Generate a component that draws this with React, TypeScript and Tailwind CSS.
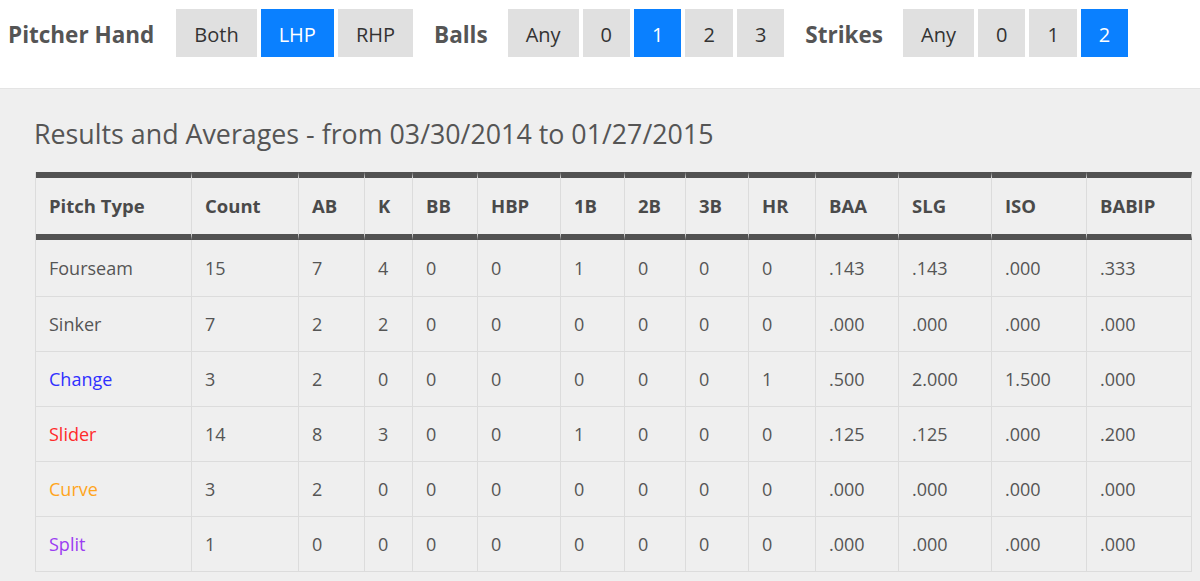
import React from "react";

type Group = { label: string; options: string[]; active: string; ml: string; mr: string };

const groups: Group[] = [
  { label: "Pitcher Hand", options: ["Both", "LHP", "RHP"], active: "LHP", ml: "ml-0", mr: "mr-[22px]" },
  { label: "Balls", options: ["Any", "0", "1", "2", "3"], active: "1", ml: "ml-[21px]", mr: "mr-[20px]" },
  { label: "Strikes", options: ["Any", "0", "1", "2"], active: "2", ml: "ml-[21px]", mr: "mr-[20px]" },
];

const headers = ["Pitch Type", "Count", "AB", "K", "BB", "HBP", "1B", "2B", "3B", "HR", "BAA", "SLG", "ISO", "BABIP"];
const widths = [156, 107, 66, 48, 65, 83, 64, 61, 63, 67, 83, 93, 95, 105];

const rows: { name: string; color: string; vals: string[] }[] = [
  { name: "Fourseam", color: "text-[#555555]", vals: ["15", "7", "4", "0", "0", "1", "0", "0", "0", ".143", ".143", ".000", ".333"] },
  { name: "Sinker", color: "text-[#555555]", vals: ["7", "2", "2", "0", "0", "0", "0", "0", "0", ".000", ".000", ".000", ".000"] },
  { name: "Change", color: "text-[#2f2fff]", vals: ["3", "2", "0", "0", "0", "0", "0", "0", "1", ".500", "2.000", "1.500", ".000"] },
  { name: "Slider", color: "text-[#ff2b2b]", vals: ["14", "8", "3", "0", "0", "1", "0", "0", "0", ".125", ".125", ".000", ".200"] },
  { name: "Curve", color: "text-[#ffa51c]", vals: ["3", "2", "0", "0", "0", "0", "0", "0", "0", ".000", ".000", ".000", ".000"] },
  { name: "Split", color: "text-[#9b3df2]", vals: ["1", "0", "0", "0", "0", "0", "0", "0", "0", ".000", ".000", ".000", ".000"] },
];

export default function App() {
  return (
    <div className="w-[1200px] h-[581px] overflow-hidden bg-white font-['Open_Sans',_'Liberation_Sans',_sans-serif]">
      <div className="h-[88px] flex items-start pt-[9px] pl-[8px]">
        {groups.map((g) => (
          <div key={g.label} className={`flex items-center ${g.ml}`}>
            <span className={`text-[22.5px] font-bold text-[#555555] leading-none pt-[5px] ${g.mr}`}>{g.label}</span>
            <div className="flex gap-[4px]">
              {g.options.map((o) => (
                <div
                  key={o}
                  className={`h-[48px] px-[18px] pt-[4px] flex items-center text-[20px] leading-none ${
                    o === g.active ? "bg-[#0a80ff] text-white" : "bg-[#e0e0e0] text-[#333333]"
                  }`}
                >
                  {o}
                </div>
              ))}
            </div>
          </div>
        ))}
      </div>
      <div className="h-[493px] bg-[#efefef] border-t border-[#e4e4e4] pl-[35px] pt-[27px]">
        <h2 className="text-[26.8px] leading-[36px] text-[#555555] ml-[-1px]">
          Results and Averages - from 03/30/2014 to 01/27/2015
        </h2>
        <div className="mt-[20px] w-[1156px] border-l border-[#dcdcdc]">
          <div className="flex">
            {headers.map((h, i) => (
              <div
                key={h}
                style={{ width: widths[i] }}
                className="shrink-0 h-[68px] border-y-[6px] border-y-[#525252] border-r border-r-[#dcdcdc] pl-[13px] flex items-center text-[18.5px] font-bold text-[#4a4a4a] whitespace-nowrap"
              >
                {h}
              </div>
            ))}
          </div>
          {rows.map((r, ri) => (
            <div key={r.name} className="flex">
              {[r.name, ...r.vals].map((v, vi) => (
                <div
                  key={vi}
                  style={{ width: widths[vi] }}
                  className={`shrink-0 ${ri === 0 ? "h-[57px]" : "h-[55px]"} border-b border-r border-[#dcdcdc] pl-[13px] flex items-center text-[18px] whitespace-nowrap ${
                    vi === 0 ? r.color : "text-[#555555]"
                  }`}
                >
                  {v}
                </div>
              ))}
            </div>
          ))}
        </div>
      </div>
    </div>
  );
}
